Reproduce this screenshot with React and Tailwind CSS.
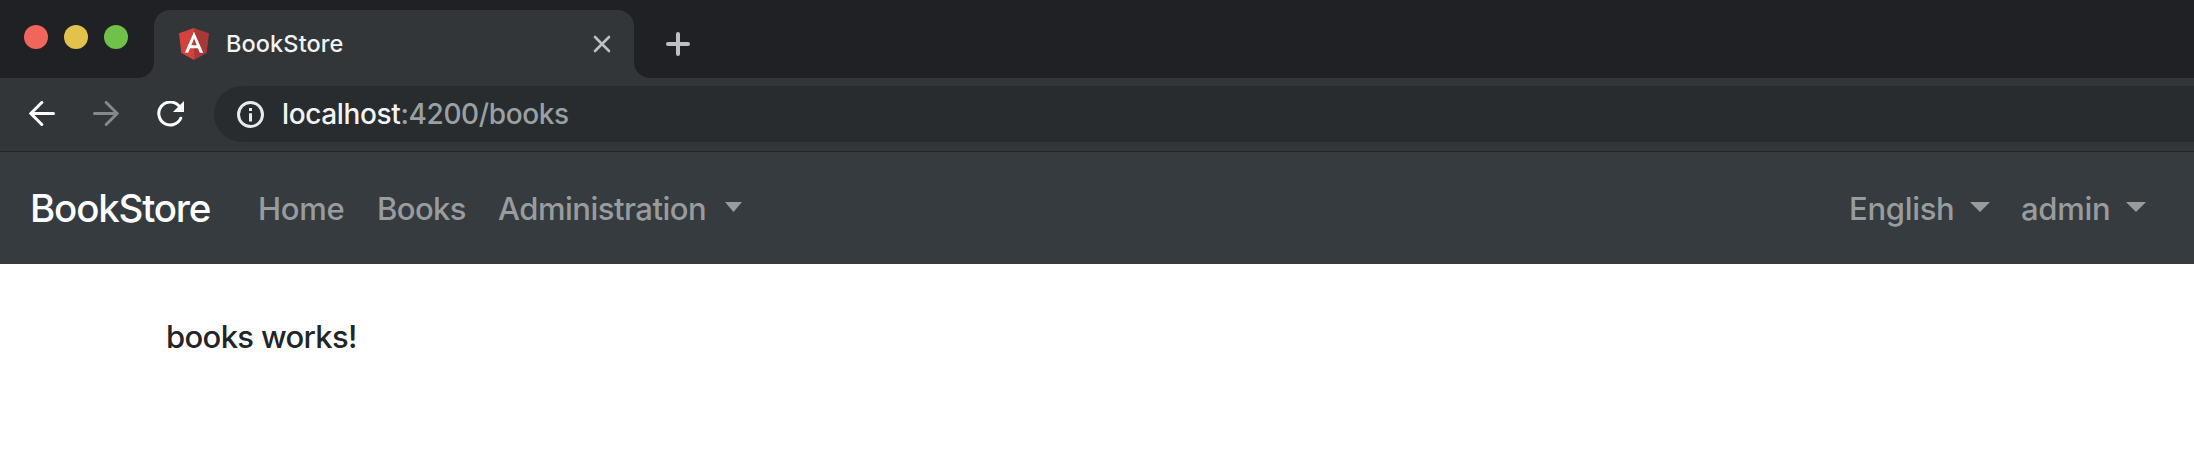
const Caret = ({ className = 'w-[20px]' }) => (
  <svg className={`mt-[-4px] h-[10px] shrink-0 ${className}`} viewBox="0 0 20 10" preserveAspectRatio="none" fill="currentColor">
    <path d="M0 0H20L10 10Z" />
  </svg>
);

function TabStrip() {
  return (
    <div className="flex h-[78px] bg-[#323639]">
      <div className="flex w-[154px] gap-4 rounded-br-2xl bg-[#202124] pl-6 pt-[25px]">
        <span className="size-6 rounded-full bg-[#f0655c]" />
        <span className="size-6 rounded-full bg-[#e2c14d]" />
        <span className="size-6 rounded-full bg-[#70c04a]" />
      </div>
      <div className="w-[480px] bg-[linear-gradient(#202124_50%,#323639_50%)] pt-[10px]">
        <div className="flex h-[68px] items-center rounded-t-2xl bg-[#323639] pl-[25px] pr-[23px]">
          <svg className="h-[32px] w-[30px] shrink-0" viewBox="0 0 30 32">
            <path fill="#d3433c" d="M15 0L0 5.2L2.3 25L15 32Z" />
            <path fill="#a93836" d="M15 0L30 5.2L27.7 25L15 32Z" />
            <path fill="#fff" fillRule="evenodd" d="M15 3.8L5.8 24.8H9.2L11.1 20.2H18.9L20.8 24.8H24.2ZM15 10.4L17.7 17.2H12.3Z" />
          </svg>
          <span className="ml-[17px] text-[23.5px] font-[450] tracking-[0.1px] text-[#f1f3f4]">BookStore</span>
          <svg className="ml-auto h-[18px] w-[18px]" viewBox="0 0 18 18" stroke="#bdc1c6" strokeWidth="2.6" strokeLinecap="round">
            <path d="M2 2L16 16M16 2L2 16" />
          </svg>
        </div>
      </div>
      <div className="flex-1 rounded-bl-2xl bg-[#202124] pl-[32px] pt-[32px]">
        <svg className="size-6" viewBox="0 0 24 24" stroke="#bdc1c6" strokeWidth="4" strokeLinecap="round">
          <path d="M12 2V22M2 12H22" />
        </svg>
      </div>
    </div>
  );
}

function Toolbar() {
  return (
    <div className="flex h-[74px] border-b border-[#242628] bg-[#323639] pt-2">
      <div className="flex w-[214px] gap-[38px] pl-[29px] pt-[15px]">
        <svg className="h-[26px] w-[26px]" viewBox="0 0 26 26" fill="none" stroke="#fff" strokeWidth="3" strokeLinecap="round">
          <path d="M24.5 12.5H2M12.8 1.5L1.8 12.5L12.8 23.5" />
        </svg>
        <svg className="h-[26px] w-[26px]" viewBox="0 0 26 26" fill="none" stroke="#86898b" strokeWidth="3" strokeLinecap="round">
          <path d="M1.5 12.5H24M13.2 1.5L24.2 12.5L13.2 23.5" />
        </svg>
        <svg className="h-[26px] w-[27px]" viewBox="0 0 27 26" fill="none">
          <path stroke="#fff" strokeWidth="3" strokeLinecap="round" d="M22.2 5.2A11.5 11.5 0 1 0 23.8 17.2" />
          <path fill="#fff" d="M27 0V11H16Z" />
        </svg>
      </div>
      <div className="flex h-14 flex-1 items-center rounded-l-full bg-[#282c2e] pl-[23px]">
        <svg className="size-[27px]" viewBox="0 0 27 27" fill="none">
          <circle cx="13.5" cy="13.5" r="12" stroke="#e8eaed" strokeWidth="3" />
          <path fill="#e8eaed" d="M12 7H15V10H12ZM12 12.2H15V20.5H12Z" />
        </svg>
        <span className="ml-[18px] text-[28px] font-[450] tracking-[-0.37px] text-[#9aa0a3]">
          <span className="text-[#f1f3f4]">localhost</span>:4200/books
        </span>
      </div>
    </div>
  );
}

function NavBar() {
  return (
    <nav className="flex h-[112px] items-center bg-[#363b3f] pt-[2px] text-[31px] font-[450] text-[#999c9e]">
      <span className="ml-[30px] w-[228px] text-[38.5px] tracking-[-1.2px] text-white">BookStore</span>
      <span className="w-[119px] tracking-[-0.25px]">Home</span>
      <span className="w-[121px] tracking-[-0.6px]">Books</span>
      <span className="w-[227px] tracking-[-0.5px]">Administration</span>
      <Caret className="w-[17px]" />
      <span className="ml-auto w-[121px] tracking-[-0.3px]">English</span>
      <Caret />
      <span className="ml-[31px] w-[105px] tracking-[-0.3px]">admin</span>
      <Caret className="mr-[48px] w-[20px]" />
    </nav>
  );
}

export default function App() {
  return (
    <div className="h-[462px] w-full overflow-hidden bg-white font-['Inter',sans-serif]">
      <TabStrip />
      <Toolbar />
      <NavBar />
      <main className="px-[166px] pt-[49px]">
        <p className="text-[31px] font-[450] leading-[48px] tracking-[-0.66px] text-[#212529]">books works!</p>
      </main>
    </div>
  );
}
